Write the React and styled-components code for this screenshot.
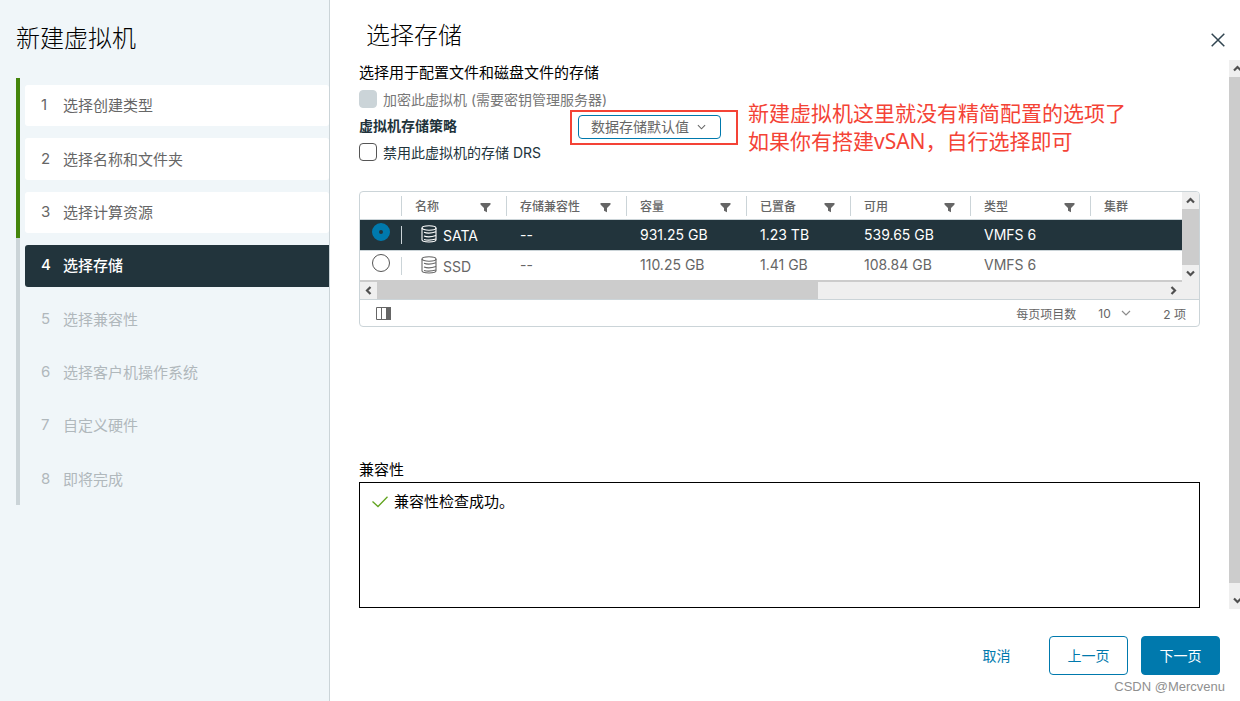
import React, { useState } from "react";
import styled, { createGlobalStyle } from "styled-components";

const steps = [
  "选择创建类型",
  "选择名称和文件夹",
  "选择计算资源",
  "选择存储",
  "选择兼容性",
  "选择客户机操作系统",
  "自定义硬件",
  "即将完成",
];

const columns = [
  { title: "名称", width: 105 },
  { title: "存储兼容性", width: 120 },
  { title: "容量", width: 120 },
  { title: "已置备", width: 104 },
  { title: "可用", width: 120 },
  { title: "类型", width: 120 },
  { title: "集群" },
];

const datastores = [
  { name: "SATA", cells: ["--", "931.25 GB", "1.23 TB", "539.65 GB", "VMFS 6", ""] },
  { name: "SSD", cells: ["--", "110.25 GB", "1.41 GB", "108.84 GB", "VMFS 6", ""] },
];

const arrows = {
  up: "M5 10.5 8.5 7 12 10.5",
  down: "M5 6.5 8.5 10 12 6.5",
  left: "M10.5 5 7 8.5 10.5 12",
  right: "M6.5 5 10 8.5 6.5 12",
};

const ScrollArrow = ({ dir, width = 17 }) => (
  <svg width={width} height="17" viewBox={`0 0 ${width} 17`} aria-hidden="true">
    <path d={arrows[dir]} fill="none" stroke="#505050" strokeWidth="2.2" />
  </svg>
);

const Chevron = ({ width = 10 }) => (
  <svg width={width} height="6" viewBox="0 0 10 6" aria-hidden="true">
    <path d="M1 1 5 5 9 1" fill="none" stroke="currentColor" strokeWidth="1.2" />
  </svg>
);

const FilterIcon = () => (
  <svg width="11" height="11" viewBox="0 0 11 11" aria-hidden="true">
    <path d="M0.5 1H10.5V2.4L7 6V10.3L4 8.8V6L0.5 2.4Z" fill="#666" />
  </svg>
);

const DatastoreIcon = () => (
  <svg width="16" height="18" viewBox="0 0 16 18" aria-hidden="true">
    <g fill="none" stroke="currentColor" strokeWidth="1.1">
      <ellipse cx="8" cy="3" rx="7" ry="2.2" />
      <path d="M1 3V14.8C1 16 4 17 8 17S15 16 15 14.8V3" />
      <path d="M3 7.3C6 8.5 10 8.5 15 6.8M3 11C6 12.2 10 12.2 15 10.5M3 14.5C6 15.4 10 15.4 15 14" />
    </g>
  </svg>
);

const App = () => {
  const [selected, setSelected] = useState("SATA");
  const [disableDrs, setDisableDrs] = useState(false);
  const current = 3;

  return (
    <>
      <GlobalStyle />
      <Wizard>
        <Sidebar>
          <SidebarTitle>新建虚拟机</SidebarTitle>
          <StepList>
            {steps.map((step, index) => (
              <Step key={step} $done={index < current}>
                <StepButton
                  type="button"
                  disabled={index > current}
                  $done={index < current}
                  $active={index === current}
                >
                  <StepNumber>{index + 1}</StepNumber>
                  {step}
                </StepButton>
              </Step>
            ))}
          </StepList>
        </Sidebar>

        <Main>
          <Header>
            <PageTitle>选择存储</PageTitle>
            <CloseButton type="button" aria-label="关闭">
              <svg width="14" height="14" viewBox="0 0 14 14">
                <path d="M0.7 0.7 13.3 13.3M13.3 0.7 0.7 13.3" stroke="#314550" strokeWidth="1.5" />
              </svg>
            </CloseButton>
          </Header>

          <BodyRow>
            <Body>
              <Description>选择用于配置文件和磁盘文件的存储</Description>
              <CheckRow $disabled>
                <Checkbox type="checkbox" disabled />
                加密此虚拟机 (需要密钥管理服务器)
              </CheckRow>
              <PolicyRow>
                <PolicyLabel htmlFor="policy">虚拟机存储策略</PolicyLabel>
                <PolicySelectBox>
                  <PolicySelect id="policy">
                    <option>数据存储默认值</option>
                  </PolicySelect>
                  <Chevron width={9} />
                </PolicySelectBox>
                <Note>
                  新建虚拟机这里就没有精简配置的选项了
                  <br />
                  如果你有搭建vSAN，自行选择即可
                </Note>
              </PolicyRow>
              <CheckRow>
                <Checkbox
                  type="checkbox"
                  checked={disableDrs}
                  onChange={(e) => setDisableDrs(e.target.checked)}
                />
                禁用此虚拟机的存储 DRS
              </CheckRow>

              <Datagrid>
                <GridTop>
                  <Table>
                    <colgroup>
                      <col width="42" />
                      {columns.map((col) => (
                        <col key={col.title} width={col.width} />
                      ))}
                    </colgroup>
                    <thead>
                      <tr>
                        <Th>
                          <ThInner />
                        </Th>
                        {columns.map((col) => (
                          <Th key={col.title}>
                            <ThInner $last={!col.width}>
                              {col.title}
                              {col.width && <FilterIcon />}
                            </ThInner>
                          </Th>
                        ))}
                      </tr>
                    </thead>
                    <tbody>
                      {datastores.map((ds) => (
                        <Row key={ds.name} $selected={selected === ds.name}>
                          <RadioCell>
                            <RadioInner>
                              <Radio
                                type="radio"
                                name="datastore"
                                aria-label={ds.name}
                                checked={selected === ds.name}
                                onChange={() => setSelected(ds.name)}
                              />
                            </RadioInner>
                          </RadioCell>
                          <Td>
                            <NameInner>
                              <DatastoreIcon />
                              <span>{ds.name}</span>
                            </NameInner>
                          </Td>
                          {ds.cells.map((cell, index) => (
                            <Td key={index}>{cell}</Td>
                          ))}
                        </Row>
                      ))}
                    </tbody>
                  </Table>
                  <GridScrollY>
                    <ScrollArrow dir="up" />
                    <Thumb />
                    <ScrollArrow dir="down" />
                  </GridScrollY>
                </GridTop>
                <GridScrollX>
                  <ScrollArrow dir="left" />
                  <ThumbTrack>
                    <ThumbX />
                  </ThumbTrack>
                  <ScrollArrow dir="right" />
                </GridScrollX>
                <GridFooter>
                  <ColumnsButton type="button" aria-label="列">
                    <svg width="15" height="13" viewBox="0 0 15 13">
                      <path d="M0.5 0.5H14.5V12.5H0.5ZM5.5 0.5V12.5" fill="none" stroke="#666" />
                      <rect x="10" y="0" width="5" height="13" fill="#666" />
                    </svg>
                  </ColumnsButton>
                  <label htmlFor="page-size">每页项目数</label>
                  <PageSizeBox>
                    <PageSize id="page-size">
                      <option>10</option>
                    </PageSize>
                    <Chevron />
                  </PageSizeBox>
                  <span>2 项</span>
                </GridFooter>
              </Datagrid>

              <CompatTitle>兼容性</CompatTitle>
              <CompatBox>
                <CompatMessage>
                  <svg width="16" height="12" viewBox="0 0 16 12" aria-hidden="true">
                    <path d="M0.5 5.5 6 10.5 15.5 0.8" fill="none" stroke="#62a420" strokeWidth="1.3" />
                  </svg>
                  兼容性检查成功。
                </CompatMessage>
              </CompatBox>
            </Body>
            <PageScroll>
              <ScrollArrow dir="up" width={11} />
              <Thumb />
              <PageScrollEnd>
                <ScrollArrow dir="down" width={11} />
              </PageScrollEnd>
            </PageScroll>
          </BodyRow>

          <Footer>
            <Button type="button" $variant="link">取消</Button>
            <Button type="button">上一页</Button>
            <Button type="button" $variant="primary">下一页</Button>
          </Footer>
          <Watermark>CSDN @Mercvenu</Watermark>
        </Main>
      </Wizard>
    </>
  );
};

export default App;

const GlobalStyle = createGlobalStyle`
  * {
    box-sizing: border-box;
  }
  body {
    margin: 0;
    background: #fff;
    color: #000;
    font-family: Inter, "Noto Sans CJK SC", sans-serif;
    font-size: 14px;
  }
  button, select, input {
    margin: 0;
    font-family: inherit;
  }
  svg {
    display: block;
    flex-shrink: 0;
  }
`;

const Wizard = styled.div`
  display: flex;
  min-height: 100vh;
`;

const Sidebar = styled.aside`
  flex: 0 0 330px;
  background: #f0f6f9;
  border-right: 1px solid #cbd4d8;
`;

const SidebarTitle = styled.h1`
  margin: 0;
  padding: 20px 16px;
  font-size: 24px;
  line-height: 38px;
  font-weight: 300;
`;

const StepList = styled.ol`
  display: grid;
  grid-auto-rows: 1fr;
  min-height: 427px;
  margin: 0;
  padding: 0 0 0 16px;
  list-style: none;
`;

const Step = styled.li`
  display: flex;
  padding: 7px 0 5px 5px;
  border-left: 4px solid ${(props) => (props.$done ? "#44850c" : "#cbd4d8")};
`;

const StepButton = styled.button`
  display: flex;
  flex: 1;
  align-items: center;
  padding: 0 16px 2px;
  border: none;
  border-radius: ${(props) => (props.$active ? "3px 0 0 3px" : "3px")};
  background: ${(props) =>
    props.$active ? "#22343c" : props.$done ? "#fff" : "transparent"};
  color: ${(props) =>
    props.$active ? "#fff" : props.$done ? "#666" : "#b0b8bc"};
  font-size: 15px;
  font-weight: ${(props) => (props.$active ? 500 : 400)};
  text-align: left;
`;

const StepNumber = styled.span`
  width: 22px;
`;

const Main = styled.main`
  display: flex;
  flex: 1;
  flex-direction: column;
  min-width: 0;
`;

const Header = styled.header`
  display: flex;
  justify-content: space-between;
  height: 60px;
  padding: 17px 15px 0 36px;
`;

const PageTitle = styled.h2`
  margin: 0;
  font-size: 24px;
  line-height: 38px;
  font-weight: 300;
`;

const CloseButton = styled.button`
  display: flex;
  align-items: center;
  padding: 3px 0 0;
  border: none;
  background: none;
  cursor: pointer;
`;

const BodyRow = styled.div`
  display: flex;
`;

const Body = styled.div`
  flex: 1;
  min-width: 0;
  padding: 0 29px;
`;

const Description = styled.p`
  margin: 0;
  font-size: 15px;
  line-height: 26px;
`;

const CheckRow = styled.label`
  display: flex;
  align-items: center;
  gap: 6px;
  height: 26px;
  color: ${(props) => (props.$disabled ? "#777" : "#21333b")};
`;

const Checkbox = styled.input`
  appearance: none;
  width: 18px;
  height: 18px;
  border: 1px solid #555;
  border-radius: 4px;
  background: #fff;

  &:checked {
    background: #0079ad;
  }
  &:disabled {
    border-color: #cbd4d8;
    background: #cbd4d8;
  }
`;

const PolicyRow = styled.div`
  position: relative;
  display: flex;
  align-items: flex-end;
  height: 27px;
`;

const PolicyLabel = styled.label`
  width: 219px;
  color: #21333b;
  font-weight: 700;
  line-height: 26px;
`;

const PolicySelectBox = styled.div`
  position: relative;
  display: flex;
  align-items: center;
  color: #666;

  svg {
    position: absolute;
    right: 15px;
    pointer-events: none;
  }
  /* red marker around the policy select */
  &::after {
    content: "";
    position: absolute;
    inset: -5px -17px -6px -8px;
    border: 2px solid #f44336;
    pointer-events: none;
  }
`;

const PolicySelect = styled.select`
  appearance: none;
  width: 143px;
  height: 24px;
  padding: 0 26px 2px 12px;
  border: 1px solid #0079ad;
  border-radius: 4px;
  background: #fff;
  color: #666;
  font-size: 14px;
`;

const Note = styled.p`
  position: absolute;
  top: -13px;
  left: 389px;
  margin: 0;
  color: #f44336;
  font-family: "Noto Sans", "Noto Sans CJK SC", sans-serif;
  font-size: 21px;
  line-height: 28px;
  white-space: nowrap;
`;

const Datagrid = styled.section`
  margin-top: 26px;
  border: 1px solid #cbd4d8;
  border-radius: 4px;
  overflow: hidden;
  color: #666;
`;

const GridTop = styled.div`
  display: flex;
`;

const Table = styled.table`
  flex: 1;
  width: 100%;
  min-width: 0;
  table-layout: fixed;
  border-spacing: 0;
  border-bottom: 2px solid #ccc;
`;

const Th = styled.th`
  height: 28px;
  padding: 0;
  border-bottom: 1px solid #cbd4d8;
  font-size: 12px;
  font-weight: 500;
`;

const ThInner = styled.div`
  display: flex;
  align-items: center;
  justify-content: space-between;
  height: 20px;
  padding: 0 15px 0 13px;
  border-right: ${(props) => (props.$last ? "none" : "1px solid #cbd4d8")};

  svg {
    margin-top: 4px;
  }
`;

const Td = styled.td`
  height: 29px;
  padding: 0 0 2px 13px;
`;

const Row = styled.tr`
  background: ${(props) => (props.$selected ? "#22343c" : "#fff")};
  color: ${(props) => (props.$selected ? "#fff" : "#666")};

  &:first-child td {
    height: 31px;
    border-bottom: 1px solid #cbd4d8;
  }
`;

const RadioCell = styled.td`
  padding: 0;
`;

const RadioInner = styled.div`
  display: flex;
  align-items: flex-start;
  justify-content: center;
  height: 18px;
  border-right: 1px solid #cbd4d8;
`;

const Radio = styled.input`
  appearance: none;
  width: 18px;
  height: 18px;
  margin-top: -3px;
  border: 1px solid #555;
  border-radius: 50%;
  background: #fff;

  &:checked {
    border: 7px solid #0079ad;
    background: #22343c;
  }
`;

const NameInner = styled.div`
  display: flex;
  align-items: center;
  gap: 6px;
  padding-left: 6px;

  span {
    padding-top: 3px;
  }
`;

const GridScrollY = styled.div`
  display: flex;
  flex-direction: column;
  width: 17px;
  background: #efefef;
`;

const Thumb = styled.div`
  flex: 1;
  background: #ccc;
`;

const GridScrollX = styled.div`
  display: flex;
  padding-right: 17px;
  border-bottom: 1px solid #cbd4d8;
  background: #efefef;
`;

const ThumbTrack = styled.div`
  flex: 1;
`;

const ThumbX = styled.div`
  width: 56%;
  height: 100%;
  background: #ccc;
`;

const GridFooter = styled.footer`
  display: flex;
  align-items: center;
  height: 26px;
  padding: 0 13px 0 16px;
  font-size: 12px;
`;

const ColumnsButton = styled.button`
  margin-right: auto;
  padding: 0;
  border: none;
  background: none;
`;

const PageSizeBox = styled.div`
  position: relative;
  display: flex;
  align-items: center;
  margin: 0 32px 0 22px;

  svg {
    position: absolute;
    right: 0;
    color: #8c8c8c;
    pointer-events: none;
  }
`;

const PageSize = styled.select`
  appearance: none;
  width: 33px;
  padding: 0;
  border: none;
  background: none;
  color: #666;
  font-size: 12px;
`;

const CompatTitle = styled.h3`
  margin: 130px 0 0;
  font-size: 15px;
  line-height: 25px;
  font-weight: 400;
`;

const CompatBox = styled.div`
  min-height: 126px;
  margin-bottom: 1px;
  padding: 7px 12px;
  border: 1px solid #000;
`;

const CompatMessage = styled.p`
  display: flex;
  align-items: center;
  gap: 6px;
  margin: 0;
  font-size: 15px;
  line-height: 24px;
`;

const PageScroll = styled.div`
  display: flex;
  flex-direction: column;
  width: 11px;
  background: #efefef;
`;

const PageScrollEnd = styled.div`
  padding: 9px 0 0;
`;

const Footer = styled.footer`
  display: flex;
  justify-content: flex-end;
  gap: 13px;
  padding: 27px 20px 0;
`;

const Button = styled.button`
  min-width: 79px;
  height: 39px;
  padding: 0 16px 2px;
  border: 1px solid ${(props) => (props.$variant === "link" ? "transparent" : "#0079ad")};
  border-radius: 4px;
  background: ${(props) => (props.$variant === "primary" ? "#0079ad" : "transparent")};
  color: ${(props) => (props.$variant === "primary" ? "#fff" : "#0079ad")};
  font-size: 14px;
  cursor: pointer;
`;

const Watermark = styled.small`
  align-self: flex-end;
  padding: 2px 15px 0 0;
  color: #8f8f8f;
  font-family: "Liberation Sans", Arial, sans-serif;
  font-size: 13px;
  line-height: 20px;
`;
